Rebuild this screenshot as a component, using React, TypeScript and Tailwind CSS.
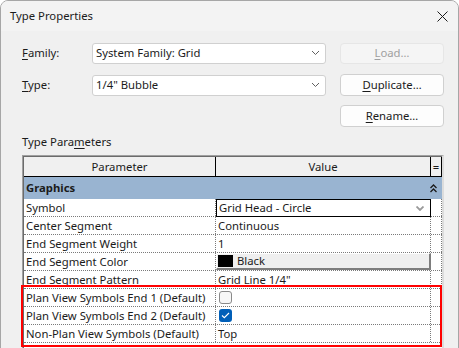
import React from "react";

function Chevron() {
  return (
    <svg width="9" height="6" viewBox="0 0 9 6" className="shrink-0">
      <path d="M1 1 L4.5 4.5 L8 1" fill="none" stroke="#606060" strokeWidth="1" />
    </svg>
  );
}

function Combo({ text }: { text: string }) {
  return (
    <div className="w-[234px] h-[21px] bg-white border border-[#d0d0d0] rounded-[3px] flex items-center pl-[3px] pr-[5px]">
      <span className="flex-1 leading-none">{text}</span>
      <Chevron />
    </div>
  );
}

type RowProps = {
  label: string;
  children?: React.ReactNode;
  noValueBorder?: boolean;
};

function Row({ label, children, noValueBorder }: RowProps) {
  return (
    <div className="flex h-[18px] border-b border-dotted border-[#7a7a7a] bg-white">
      <div className="w-[192px] shrink-0 border-r border-dotted border-[#7a7a7a] pl-[2px] flex items-center leading-none whitespace-nowrap overflow-hidden">
        {label}
      </div>
      <div
        className={
          noValueBorder
            ? "w-[215px] shrink-0 flex items-stretch"
            : "w-[215px] shrink-0 border-r border-dotted border-[#7a7a7a] flex items-center pl-[2px] leading-none"
        }
      >
        {children}
      </div>
      <div className="w-[11px] shrink-0 border-r border-dotted border-[#7a7a7a]" />
    </div>
  );
}

export default function App() {
  return (
    <div className="w-[459px] h-[348px] overflow-hidden bg-white">
      <div className="relative w-[459px] h-[380px] bg-[#f0f0f0] border border-[#a6a6a6] rounded-t-[8px] text-[11.3px] text-[#1b1b1b] font-['Noto_Sans',sans-serif] overflow-hidden">
        {/* Title bar */}
        <div className="h-[30px] bg-[#f3f3f3] flex items-center pl-[9px] pr-[10px]">
          <span className="flex-1 leading-none">Type Properties</span>
          <svg width="11" height="11" viewBox="0 0 11 11">
            <path d="M0.5 0.5 L10.5 10.5 M10.5 0.5 L0.5 10.5" stroke="#1b1b1b" strokeWidth="1" />
          </svg>
        </div>

        <div className="pl-[21px] pt-[11px]">
          {/* Family row */}
          <div className="flex items-center h-[22px]">
            <div className="w-[70px] leading-none">
              <span className="underline underline-offset-2">F</span>amily:
            </div>
            <Combo text="System Family: Grid" />
            <div className="ml-[14px] w-[104px] h-[21px] bg-[#f5f5f5] border border-[#e6e6e6] rounded-[4px] flex items-center justify-center text-[#a0a0a0] leading-none">
              <span>
                <span className="underline underline-offset-2">L</span>oad…
              </span>
            </div>
          </div>
          {/* Type row */}
          <div className="flex items-center h-[22px] mt-[10px]">
            <div className="w-[70px] leading-none">
              <span className="underline underline-offset-2">T</span>ype:
            </div>
            <Combo text={'1/4" Bubble'} />
            <div className="ml-[14px] w-[104px] h-[22px] bg-[#fdfdfd] border border-[#d0d0d0] rounded-[4px] flex items-center justify-center leading-none">
              <span>
                <span className="underline underline-offset-2">D</span>uplicate…
              </span>
            </div>
          </div>
          {/* Rename row */}
          <div className="flex items-center h-[22px] mt-[9px]">
            <div className="w-[304px]" />
            <div className="ml-[14px] w-[104px] h-[22px] bg-[#fdfdfd] border border-[#d0d0d0] rounded-[4px] flex items-center justify-center leading-none">
              <span>
                <span className="underline underline-offset-2">R</span>ename…
              </span>
            </div>
          </div>

          <div className="mt-[7px] h-[16px] flex items-center leading-none">
            <span>
              Type Para<span className="underline underline-offset-2">m</span>eters
            </span>
          </div>

          {/* Table */}
          <div className="relative mt-[5px] w-[422px] border-t border-l border-[#a0a0a0] border-r-2 border-r-[#dcdcdc]">
            <div className="border-t border-l border-[#6b6b6b] bg-white">
              {/* Header */}
              <div className="flex h-[20px] bg-[#f0f0f0] border-b border-black">
                <div className="w-[192px] shrink-0 border-r border-black flex items-center justify-center leading-none">
                  Parameter
                </div>
                <div className="w-[215px] shrink-0 border-r border-black flex items-center justify-center leading-none">
                  Value
                </div>
                <div className="w-[11px] shrink-0 border-r border-black flex items-center justify-center leading-none">
                  =
                </div>
              </div>
              {/* Graphics group */}
              <div className="flex items-center h-[22px] bg-[#99b4d1] pl-[2px] pr-[5px]">
                <span className="flex-1 font-bold leading-none">Graphics</span>
                <svg width="7" height="9" viewBox="0 0 7 9">
                  <path d="M0.5 4 L3.5 1 L6.5 4 M0.5 8 L3.5 5 L6.5 8" fill="none" stroke="#1b1b1b" strokeWidth="1.3" />
                </svg>
              </div>
              {/* Symbol */}
              <Row label="Symbol" noValueBorder>
                <div className="w-[215px] border border-black bg-white flex items-center pl-[2px] pr-[6px] -mb-[1px] leading-none">
                  <span className="flex-1">Grid Head - Circle</span>
                  <svg width="8" height="5" viewBox="0 0 8 5">
                    <path d="M0.5 0.5 L4 4 L7.5 0.5" fill="none" stroke="#9a9a9a" strokeWidth="1.8" />
                  </svg>
                </div>
              </Row>
              <Row label="Center Segment">Continuous</Row>
              <Row label="End Segment Weight">1</Row>
              <Row label="End Segment Color" noValueBorder>
                <div className="w-[215px] bg-[#efefef] border-t border-l border-white border-r-2 border-b-2 border-r-[#7d7d7d] border-b-[#7d7d7d] flex items-center pl-[1px] leading-none">
                  <div className="w-[15px] h-[12px] bg-black mr-[4px]" />
                  <span>Black</span>
                </div>
              </Row>
              <Row label="End Segment Pattern">{'Grid Line 1/4"'}</Row>
              <Row label="Plan View Symbols End 1 (Default)">
                <div className="w-[13px] h-[13px] ml-[1px] rounded-[3px] border border-[#8a8a8a] bg-[#f7f7f7]" />
              </Row>
              <Row label="Plan View Symbols End 2 (Default)">
                <div className="w-[13px] h-[13px] ml-[1px] rounded-[3px] bg-[#005fb8] flex items-center justify-center">
                  <svg width="9" height="7" viewBox="0 0 9 7">
                    <path d="M1 3.5 L3.3 5.7 L8 1" fill="none" stroke="white" strokeWidth="1.1" />
                  </svg>
                </div>
              </Row>
              <Row label="Non-Plan View Symbols (Default)">Top</Row>
              <div className="h-[20px] bg-white" />
            </div>
            {/* Red annotation box */}
            <div className="absolute left-[-2px] top-[129px] w-[421px] h-[62px] border-2 border-[#ff0000]" />
          </div>
        </div>
      </div>
    </div>
  );
}
